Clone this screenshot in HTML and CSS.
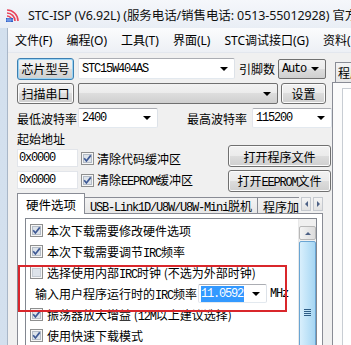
FILE: index.html
```html
<!DOCTYPE html>
<html lang="zh-CN">
<head>
<meta charset="UTF-8">
<title>STC-ISP (V6.92L)</title>
<link rel="stylesheet" href="styles.css">
</head>
<body>
<div class="window">
  <div class="titlebar">
    <svg class="app-icon" width="16" height="16" viewBox="0 0 16 16">
      <path d="M2 9 A5 5 0 0 1 7 14" fill="none" stroke="#e8435a" stroke-width="1.6"/>
      <path d="M2 6 A8 8 0 0 1 10 14" fill="none" stroke="#e8435a" stroke-width="1.6"/>
      <path d="M2 3 A11 11 0 0 1 13 14" fill="none" stroke="#e8435a" stroke-width="1.6"/>
      <rect x="1" y="11" width="7" height="4" fill="#2f5fc4"/>
      <path d="M3 11v4M5 11v4M1 13h7" stroke="#9fc0ff" stroke-width="0.7"/>
    </svg>
    <span class="title">STC-ISP (V6.92L) (服务电话/销售电话: 0513-55012928) 官方网站</span>
  </div>
  <div class="frame">
    <div class="client">
      <div class="menubar">
        <span class="menu">文件(F)</span>
        <span class="menu">编程(O)</span>
        <span class="menu">工具(T)</span>
        <span class="menu">界面(L)</span>
        <span class="menu">STC调试接口(G)</span>
        <span class="menu">资料(D)</span>
      </div>
      <div class="main">
        <div class="left">
          <div class="row r1">
            <div class="btn btn-default w-chip">芯片型号</div>
            <div class="combo edit w-mcu"><span class="sim">STC15W404AS</span><i class="arrow"></i></div>
            <span class="label pins">引脚数</span>
            <div class="combo list w-auto"><span class="sim">Auto</span><i class="arrow"></i></div>
          </div>
          <div class="row r2">
            <div class="btn w-chip">扫描串口</div>
            <div class="combo list w-port"><span></span><i class="arrow"></i></div>
            <div class="btn w-set">设置</div>
          </div>
          <div class="row r3">
            <span class="label">最低波特率</span>
            <div class="combo edit w-baud low"><span class="sim">2400</span><i class="arrow"></i></div>
            <span class="label high">最高波特率</span>
            <div class="combo edit w-baud"><span class="sim">115200</span><i class="arrow"></i></div>
          </div>
          <div class="addr-block">
            <div class="addr-left">
              <div class="label addr-title">起始地址</div>
              <div class="addr-row">
                <div class="field"><span class="sim">0x0000</span></div>
                <svg class="cb" width="13" height="13" viewBox="0 0 13 13"><rect x="0.5" y="0.5" width="12" height="12" fill="#f6f6f6" stroke="#8e8f8f"/><rect x="2.5" y="2.5" width="8" height="8" fill="#dde3ea" stroke="#b4bcc6"/><path d="M3.2 6.3 L5.4 9 L9.8 3.4" fill="none" stroke="#3f5a95" stroke-width="1.7"/></svg>
                <span class="cb-label">清除代码缓冲区</span>
              </div>
              <div class="addr-row">
                <div class="field"><span class="sim">0x0000</span></div>
                <svg class="cb" width="13" height="13" viewBox="0 0 13 13"><rect x="0.5" y="0.5" width="12" height="12" fill="#f6f6f6" stroke="#8e8f8f"/><rect x="2.5" y="2.5" width="8" height="8" fill="#dde3ea" stroke="#b4bcc6"/><path d="M3.2 6.3 L5.4 9 L9.8 3.4" fill="none" stroke="#3f5a95" stroke-width="1.7"/></svg>
                <span class="cb-label">清除<span class="sim">EEPROM</span>缓冲区</span>
              </div>
            </div>
            <div class="addr-right">
              <div class="btn w-open"><span>打开程序文件</span></div>
              <div class="btn w-open"><span>打开<span class="sim">EEPROM</span>文件</span></div>
            </div>
          </div>
          <div class="tabs">
            <div class="tab-strip">
              <div class="tab active">硬件选项</div>
              <div class="tab"><span><span class="sim">USB-Link1D/U8W/U8W-Mini</span>脱机</span></div>
              <div class="tab">程序加密后传输</div>
            </div>
            <div class="updown">
              <div class="ud-btn"><i class="tri-left"></i></div>
              <div class="ud-btn"><i class="tri-right"></i></div>
            </div>
          </div>
          <div class="panel">
            <div class="listbox">
              <div class="list-rows">
                <div class="opt">
                  <svg class="cb" width="13" height="13" viewBox="0 0 13 13"><rect x="0.5" y="0.5" width="12" height="12" fill="#f6f6f6" stroke="#8e8f8f"/><rect x="2.5" y="2.5" width="8" height="8" fill="#dde3ea" stroke="#b4bcc6"/><path d="M3.2 6.3 L5.4 9 L9.8 3.4" fill="none" stroke="#3f5a95" stroke-width="1.7"/></svg>
                  <span>本次下载需要修改硬件选项</span>
                </div>
                <div class="opt">
                  <svg class="cb" width="13" height="13" viewBox="0 0 13 13"><rect x="0.5" y="0.5" width="12" height="12" fill="#f6f6f6" stroke="#8e8f8f"/><rect x="2.5" y="2.5" width="8" height="8" fill="#dde3ea" stroke="#b4bcc6"/><path d="M3.2 6.3 L5.4 9 L9.8 3.4" fill="none" stroke="#3f5a95" stroke-width="1.7"/></svg>
                  <span>本次下载需要调节<span class="sim">IRC</span>频率</span>
                </div>
                <div class="opt">
                  <svg class="cb" width="13" height="13" viewBox="0 0 13 13"><rect x="0.5" y="0.5" width="12" height="12" fill="#f6f6f6" stroke="#8e8f8f"/><rect x="2.5" y="2.5" width="8" height="8" fill="#dde3ea" stroke="#c4cbd3"/></svg>
                  <span>选择使用内部<span class="sim">IRC</span>时钟 (不选为外部时钟)</span>
                </div>
                <div class="opt freq">
                  <span>输入用户程序运行时的<span class="sim">IRC</span>频率</span>
                  <div class="combo edit w-freq"><span class="sim sel">11.0592</span><i class="arrow"></i></div>
                  <span class="sim">MHz</span>
                </div>
                <div class="opt">
                  <svg class="cb" width="13" height="13" viewBox="0 0 13 13"><rect x="0.5" y="0.5" width="12" height="12" fill="#f6f6f6" stroke="#8e8f8f"/><rect x="2.5" y="2.5" width="8" height="8" fill="#dde3ea" stroke="#b4bcc6"/><path d="M3.2 6.3 L5.4 9 L9.8 3.4" fill="none" stroke="#3f5a95" stroke-width="1.7"/></svg>
                  <span>振荡器放大增益 (<span class="sim">12M</span>以上建议选择)</span>
                </div>
                <div class="opt">
                  <svg class="cb" width="13" height="13" viewBox="0 0 13 13"><rect x="0.5" y="0.5" width="12" height="12" fill="#f6f6f6" stroke="#8e8f8f"/><rect x="2.5" y="2.5" width="8" height="8" fill="#dde3ea" stroke="#b4bcc6"/><path d="M3.2 6.3 L5.4 9 L9.8 3.4" fill="none" stroke="#3f5a95" stroke-width="1.7"/></svg>
                  <span>使用快速下载模式</span>
                </div>
              </div>
              <div class="vscroll">
                <div class="sb-up"><i class="tri-up"></i></div>
                <div class="sb-thumb"><i class="grip"></i></div>
              </div>
            </div>
            <div class="highlight"></div>
          </div>
        </div>
        <div class="side">
          <div class="side-tab">程序文件</div>
          <div class="side-body"><div class="side-inner"></div></div>
        </div>
      </div>
    </div>
  </div>
</div>
</body>
</html>
```

FILE: styles.css
```css
body { margin: 0; width: 351px; height: 345px; overflow: hidden; font: 12px "Noto Sans CJK SC", sans-serif; color: #000; }
.window { height: 345px; overflow: hidden; background: #c9d8ea; display: flex; flex-direction: column; }

.titlebar {
    flex: none;
    height: 28px;
    display: flex;
    align-items: center;
    padding-left: 5px;
    background: linear-gradient(#f5f7fb, #e9eef5);
    white-space: nowrap;
    overflow: hidden;
}
.app-icon { flex: none; margin-top: 1px; }
.title { margin-left: 7px; font: 12.5px "Noto Sans", "Noto Sans CJK SC", sans-serif; color: #111; letter-spacing: -0.1px; }

.frame { flex: 1; min-height: 0; display: flex; padding-left: 7px; background: linear-gradient(90deg, #d3e0ee, #c2d3e8); }
.client { flex: 1; min-width: 0; background: #f0f0f0; border-left: 1px solid #a9b7c8; display: flex; flex-direction: column; }

.menubar {
    flex: none;
    height: 24px;
    display: flex;
    align-items: center;
    padding-left: 6px;
    background: linear-gradient(#fbfcfd, #edf0f5);
    border-bottom: 1px solid #e3e7ee;
    white-space: nowrap;
    overflow: hidden;
}
.menu { padding: 0 1px; margin-right: 12px; font-family: "Noto Sans", "Noto Sans CJK SC", sans-serif; font-size: 12px; }

.main { flex: 1; min-height: 0; display: flex; padding-top: 4px; overflow: hidden; }
.left { width: 315px; padding-left: 9px; flex: none; }

.sim { font-family: "Liberation Mono", monospace; font-size: 12px; letter-spacing: -1.2px; color: #000; }

.row { display: flex; align-items: center; }
.r1 { height: 23px; }
.r2 { height: 21px; margin-top: 3px; }
.r3 { height: 20px; margin-top: 4px; }

.label { white-space: nowrap; }
.pins { margin: 0 3px 0 4px; }
.high { margin-left: auto; margin-right: 5px; }

.btn {
    box-sizing: border-box;
    height: 21px;
    display: flex;
    align-items: center;
    justify-content: center;
    border: 1px solid #707070;
    border-radius: 3px;
    background: linear-gradient(#f2f2f2, #ebebeb 50%, #dddddd 50%, #cfcfcf);
    box-shadow: inset 0 0 0 1px #fbfbfb;
    white-space: nowrap;
}
.btn-default { height: 22px; border-color: #3c7fb1; box-shadow: inset 0 0 0 1px #9ad4f5; }
.w-chip { width: 57px; }
.w-set { width: 45px; margin-left: 3px; }
.w-open { width: 103px; height: 22px; }

.combo {
    box-sizing: border-box;
    height: 21px;
    display: flex;
    align-items: center;
    padding-left: 3px;
    border: 1px solid #acacac;
    border-radius: 2px;
    white-space: nowrap;
}
.combo.edit { background: #fff; border-color: #abadb3 #dde2e8 #e3e9ef #e2e3ea; }
.combo.list { background: linear-gradient(#f2f2f2, #ebebeb 50%, #dddddd 50%, #cfcfcf); border-color: #707070; }
.arrow { margin-left: auto; margin-right: 6px; width: 0; height: 0; border-left: 4px solid transparent; border-right: 4px solid transparent; border-top: 4px solid #000; }
.w-mcu { width: 157px; margin-left: 4px; }
.w-auto { width: 48px; height: 20px; }
.w-port { width: 200px; margin-left: 4px; }
.w-baud { width: 80px; height: 20px; }
.low { margin-left: 1px; }

.addr-block { display: flex; margin-top: 3px; }
.addr-title { line-height: 16px; height: 16px; }
.addr-row { display: flex; align-items: center; height: 18px; margin-top: 2px; }
.addr-row + .addr-row { margin-top: 4px; }
.field { box-sizing: border-box; width: 61px; height: 18px; background: #fff; border: 1px solid #e2e5ea; display: flex; align-items: center; padding-left: 1px; }
.cb { flex: none; margin-left: 3px; }
.cb-label { margin-left: 3px; white-space: nowrap; }
.addr-right { margin-left: auto; margin-right: 1px; padding-top: 14px; display: flex; flex-direction: column; gap: 3px; }

.tabs { display: flex; align-items: flex-end; height: 21px; width: 306px; margin-top: 1px; }
.tab-strip { flex: 1; min-width: 0; display: flex; align-items: flex-end; overflow: hidden; height: 21px; }
.tab {
    flex: none;
    height: 17px;
    box-sizing: border-box;
    padding: 0 5px;
    border: 1px solid #898c95;
    border-bottom: none;
    margin-right: -1px;
    background: linear-gradient(#f3f3f3, #e6e6e6);
    white-space: nowrap;
    display: flex;
    align-items: center;
}
.tab.active { height: 21px; padding: 0 8px; background: #fff; position: relative; z-index: 1; font-size: 12.5px; }
.updown { flex: none; display: flex; gap: 2px; padding-bottom: 3px; margin-left: 2px; }
.ud-btn { box-sizing: border-box; width: 10px; height: 14px; border: 1px solid #c5c9cf; background: linear-gradient(#f4f4f4, #e2e2e2); display: flex; align-items: center; justify-content: center; }
.tri-left { border-top: 3px solid transparent; border-bottom: 3px solid transparent; border-right: 3px solid #4d6185; }
.tri-right { border-top: 3px solid transparent; border-bottom: 3px solid transparent; border-left: 3px solid #4d6185; }

.panel { width: 306px; height: 140px; box-sizing: border-box; border: 1px solid #898c95; margin-top: -1px; background: #fff; padding: 4px 5px 0 7px; position: relative; }
.listbox { display: flex; border: 1px solid #828790; height: 140px; background: #fff; }
.list-rows { flex: 1; padding: 1px 0 0 4px; }
.opt { height: 21px; display: flex; align-items: center; white-space: nowrap; }
.opt .cb { margin: 0 4px 0 0; }
.freq { padding-left: 5px; }
.w-freq { width: 69px; height: 19px; margin-left: 1px; padding-left: 2px; }
.sel { background: #3399ff; color: #fff; padding: 1px 1px 1px 0; }
.freq > .sim { margin-left: 3px; }

.vscroll { width: 17px; display: flex; flex-direction: column; padding-top: 7px; background: #f0f0f0; border-left: 1px solid #e8e8e8; }
.sb-up { box-sizing: border-box; height: 14px; border: 1px solid #b8b8b8; border-radius: 2px; background: linear-gradient(90deg, #f4f4f4, #dcdcdc); display: flex; align-items: center; justify-content: center; }
.tri-up { border-left: 3px solid transparent; border-right: 3px solid transparent; border-bottom: 3px solid #4d6185; }
.sb-thumb { flex: 1; margin-top: 1px; box-sizing: border-box; border: 1px solid #6aa5d3; border-radius: 2px; background: linear-gradient(90deg, #d9effc, #bfe3f8 50%, #a6d6f3); display: flex; justify-content: center; padding-top: 67px; }
.grip { width: 7px; height: 7px; background: repeating-linear-gradient(#2e5d86 0 1px, transparent 1px 2px); }

.highlight { position: absolute; left: 0; top: 51px; width: 269px; height: 47px; box-sizing: border-box; border: 2px solid #d9262b; }

.side { flex: 1; padding-top: 5px; overflow: hidden; }
.side-tab { margin-left: 3px; height: 20px; width: 60px; box-sizing: border-box; border: 1px solid #898c95; border-bottom: none; background: linear-gradient(#f3f3f3, #e6e6e6); padding-left: 2px; line-height: 19px; white-space: nowrap; }
.side-body { height: 300px; border: 1px solid #898c95; border-right: none; background: #fbfbfb; padding: 5px 0 0 9px; }
.side-inner { height: 290px; border: 1px solid #c8cdd3; border-right: none; background: #fff; }
```
